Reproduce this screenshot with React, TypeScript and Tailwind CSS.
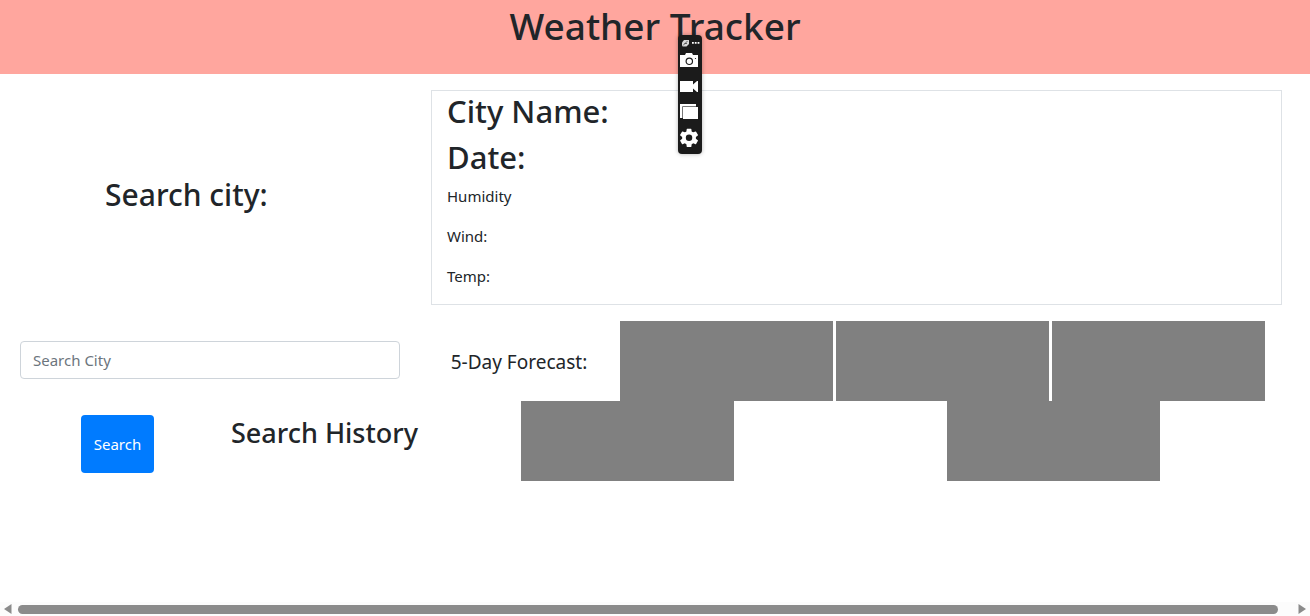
import React from "react";

const readings = ["Humidity", "Wind:", "Temp:"];

function CaptureBar() {
  return (
    <div className="absolute left-[678px] top-[35px] flex h-[119px] w-6 flex-col items-center rounded bg-[#1b1b1b] text-white shadow-[0_0_4px_rgba(0,0,0,0.3)]">
      <svg viewBox="0 0 24 119" className="h-full w-full" fill="currentColor" aria-hidden="true">
        <path d="M4 11V7.500L6 5h5v4L8.500 11.500H5z" fill="#d8d8d8" />
        <path d="M5 10.500 9.500 6M6.500 8.500h2.500" fill="none" stroke="#333" strokeWidth="0.7" />
        <path d="M14 7h1.800v1.800H14zM16.800 7h1.800v1.800h-1.800zM19.600 7h1.800v1.800h-1.800z" />
        <path d="M2 20h5l1-2h6l1 2h5v12H2z" />
        <circle cx="11.3" cy="26.3" r="3.2" fill="none" stroke="#1b1b1b" strokeWidth="1.2" />
        <circle cx="17.5" cy="23.5" r="0.6" fill="#1b1b1b" />
        <path d="M2 46h13v3.500l4-3.500h1v11h-1l-4-3.500V57H2z" />
        <path d="M2 69h16v3H5v11H2z" />
        <path d="M5 72h15v12H5z" />
        <path d="M4.500 83V71.500H18" fill="none" stroke="#777" strokeWidth="1" />
        <g transform="translate(0 91.800) scale(0.92)">
          <path
            fillRule="evenodd"
            d="M19.430 12.980c.04-.32.07-.64.07-.98s-.03-.66-.07-.98l2.110-1.650a.5.5 0 0 0 .12-.64l-2-3.460a.5.5 0 0 0-.61-.22l-2.490 1a7.300 7.300 0 0 0-1.690-.98l-.38-2.650A.49.49 0 0 0 14 2h-4a.49.49 0 0 0-.49.42l-.38 2.650c-.61.25-1.170.59-1.690.98l-2.490-1a.5.5 0 0 0-.61.22l-2 3.460a.5.5 0 0 0 .12.64l2.110 1.650c-.04.32-.07.65-.07.98s.03.66.07.98l-2.110 1.650a.5.5 0 0 0-.12.64l2 3.460c.12.22.39.3.61.22l2.490-1c.52.4 1.080.73 1.690.98l.38 2.650c.03.24.24.42.49.42h4c.25 0 .46-.18.49-.42l.38-2.650c.61-.25 1.170-.59 1.690-.98l2.490 1c.23.09.49 0 .61-.22l2-3.460a.5.5 0 0 0-.12-.64zM12 15.500a3.500 3.500 0 1 1 0-7 3.500 3.500 0 0 1 0 7z"
          />
        </g>
      </svg>
    </div>
  );
}

function Tile() {
  return <div className="h-20 w-1/4 bg-[#808080]" />;
}

export default function App() {
  return (
    <div className="relative flex min-h-screen flex-col bg-white font-['Noto_Sans','Open_Sans',sans-serif] text-base text-[#212529]">
      <header className="h-[74px] bg-[#ffa69e]">
        <h1 className="text-center text-[37px] font-medium leading-[52px]">Weather Tracker</h1>
      </header>

      <main className="grid flex-1 grid-cols-[415px_minmax(0,1fr)] items-start pr-11 pt-4">
        <form className="pl-5" onSubmit={(e) => e.preventDefault()}>
          <h2 className="pl-[85px] pt-[86px] text-[30px] font-medium leading-[38px]">
            <label htmlFor="city">Search city:</label>
          </h2>
          <input
            id="city"
            type="text"
            placeholder="Search City"
            className="mt-[127px] block h-[38px] w-[380px] rounded border border-[#ced4da] px-3 text-[15px] placeholder:text-[#6c757d]"
          />
          <div className="flex items-start pl-[61px] pt-9">
            <button type="submit" className="h-[58px] w-[73px] shrink-0 rounded bg-[#007bff] text-[15px] text-white">
              Search
            </button>
            <h3 className="ml-[77px] whitespace-nowrap text-[27px] font-medium leading-9">Search History</h3>
          </div>
        </form>

        <div>
          <section className="-mr-4 ml-4 border border-[#dee2e6] pl-[15px]">
            <h2 className="mb-1.5 text-[31px] font-medium leading-10">City Name:</h2>
            <h2 className="mb-[7px] text-[31px] font-medium leading-10">Date:</h2>
            {readings.map((label) => (
              <p key={label} className="mb-4 text-[15px] leading-6">
                {label}
              </p>
            ))}
          </section>

          <section className="mt-4">
            <div className="flex items-center justify-around">
              <h4 className="w-[201px] pl-1 pt-0.5 text-center text-[19px]">5-Day Forecast:</h4>
              <Tile />
              <Tile />
              <Tile />
            </div>
            <div className="flex justify-around">
              <Tile />
              <Tile />
            </div>
          </section>
        </div>
      </main>

      <footer className="flex h-3.5 items-center justify-between bg-[#fcfcfc] px-1 text-[#8b8b8b]" aria-hidden="true">
        <svg viewBox="0 0 8 10" className="h-2.5 w-2" fill="currentColor">
          <path d="M7.500 0v10L0 5z" />
        </svg>
        <div className="ml-1.5 mr-5 h-[9px] flex-1 rounded-full bg-[#8b8b8b]" />
        <svg viewBox="0 0 8 10" className="h-2.5 w-2" fill="currentColor">
          <path d="M0.500 0v10L8 5z" />
        </svg>
      </footer>

      <CaptureBar />
    </div>
  );
}
